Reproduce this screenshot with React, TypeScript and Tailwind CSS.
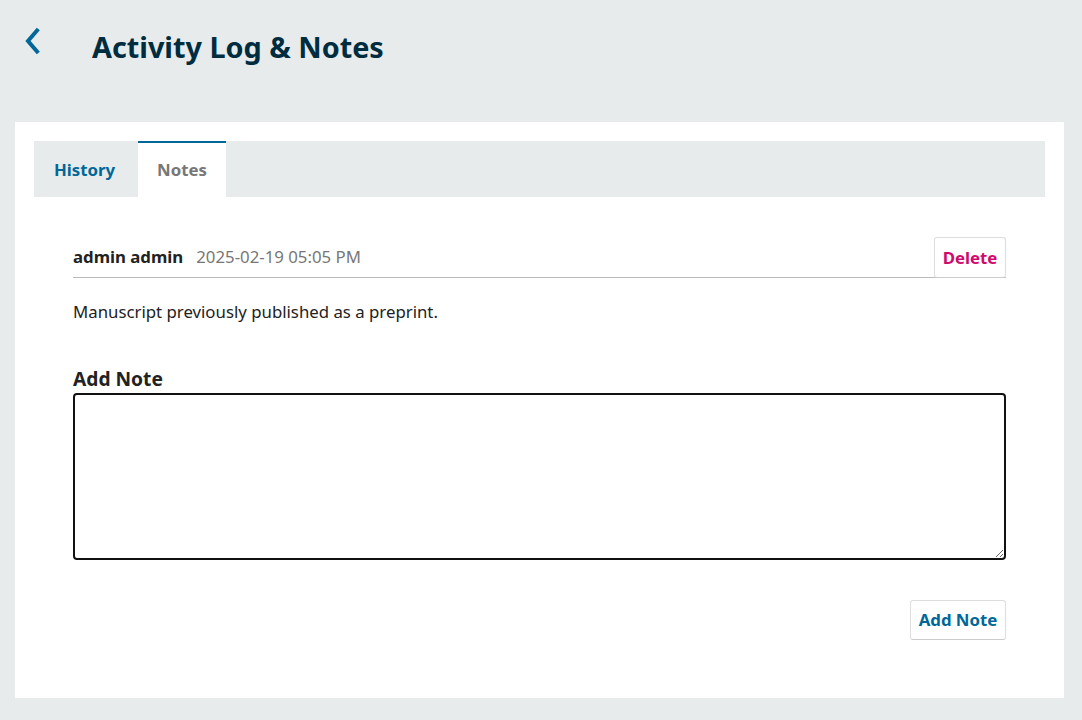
import React from 'react';

const App = () => {
  return (
    <div className="min-h-[720px] w-full bg-[#e7ebeb] font-['Noto_Sans',sans-serif] text-[#222]">
      {/* Header */}
      <div className="flex h-[122px] items-start">
        <button className="ml-[21px] mt-[27px] flex h-[28px] w-[22px] items-center justify-center text-[#006798]">
          <svg width="18" height="28" viewBox="0 0 18 28" fill="none">
            <path d="M14 3.5 L5 14 L14 24.5" stroke="currentColor" strokeWidth="4" strokeLinecap="square" />
          </svg>
        </button>
        <h1 className="ml-[49px] mt-[28px] text-[28.8px] font-bold leading-[38px] text-[#002c40]">
          Activity Log &amp; Notes
        </h1>
      </div>

      {/* Panel */}
      <div className="ml-[15px] mr-[18px] h-[576px] bg-white px-[19px] pt-[19px]">
        <div className="flex h-[56px] bg-[#e7ebeb]">
          <div className="flex w-[104px] items-center pl-[20px] pt-[2px] text-[16.8px] font-bold text-[#006798]">
            History
          </div>
          <div className="flex w-[88px] items-center justify-center border-t-2 border-[#006798] bg-white text-[16.8px] font-bold text-[#777]">
            Notes
          </div>
        </div>

        <div className="px-[39px] pt-[40px]">
          <div className="flex items-end border-b border-[#bbb]">
            <div className="flex flex-1 items-center gap-[13px] pb-[10px] text-[16.8px] leading-[20px]">
              <span className="font-bold text-[#222]">admin admin</span>
              <span className="text-[#777]">2025-02-19 05:05 PM</span>
            </div>
            <button className="-mb-px h-[41px] w-[72px] rounded-[3px] border border-[#ddd] border-b-[#ccc] bg-white text-[16.8px] font-bold text-[#d00a6c]">
              Delete
            </button>
          </div>
          <p className="mt-[22px] text-[16.8px] leading-[24px] text-[#222]">
            Manuscript previously published as a preprint.
          </p>

          <div className="mt-[43px] text-[19.2px] font-bold leading-[24px] text-[#222]">Add Note</div>
          <textarea
            autoFocus
            className="mt-[2px] block h-[167px] w-full resize-y rounded-[4px] border-2 border-[#111] bg-white px-[3px] py-[4px] text-[16.8px] outline-none"
          />

          <div className="mt-[40px] flex justify-end">
            <button className="h-[40px] w-[96px] rounded-[3px] border border-[#ddd] border-b-[#ccc] bg-white text-[16.8px] font-bold text-[#006798]">
              Add Note
            </button>
          </div>
        </div>
      </div>
    </div>
  );
};

export default App;
